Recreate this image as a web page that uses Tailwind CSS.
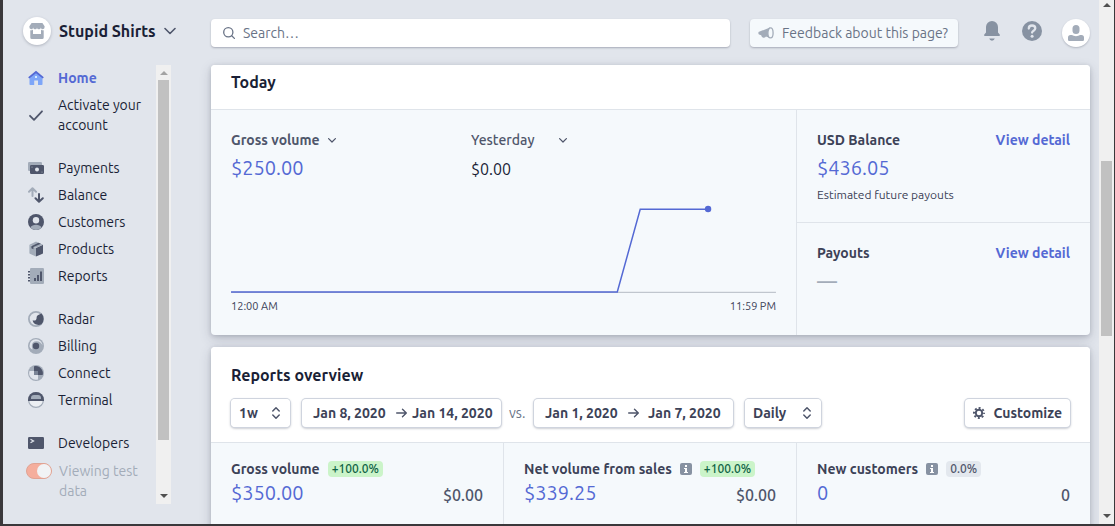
<!DOCTYPE html>
<html lang="en">
<head>
<meta charset="utf-8">
<meta name="viewport" content="width=device-width, initial-scale=1">
<title>Stupid Shirts – Dashboard</title>
<script src="https://cdn.jsdelivr.net/npm/@tailwindcss/browser@4"></script>
</head>
<body class="h-screen overflow-hidden bg-[#e1e5ec] font-['Ubuntu','Noto_Sans',sans-serif] text-sm text-[#1a1f36]">
<div class="flex h-full overflow-hidden border-r border-b-2 border-l-3 border-[#3a383b]">

  <!-- Sidebar -->
  <aside class="flex w-[168px] shrink-0 flex-col">
    <button type="button" class="mt-[17px] ml-5 flex items-center gap-2 text-left text-base font-semibold whitespace-nowrap">
      <span class="flex size-7 shrink-0 items-center justify-center rounded-full bg-white shadow-[0_1px_3px_rgba(60,66,87,0.3)]">
        <svg class="size-4" viewBox="0 0 16 16" fill="#a3acb9"><path d="M2.600 0h10.800l2.200 3.200v.9a1.900 1.900 0 0 1-3.800.3 1.900 1.900 0 0 1-3.800 0 1.900 1.900 0 0 1-3.800 0A1.900 1.900 0 0 1 .4 4.100v-.9z"/><path d="M1.300 7.300c1 .2 2-.1 2.700-.8V11h8V6.500c.7.700 1.700 1 2.700.8V14.500a1.500 1.500 0 0 1-1.500 1.500H2.800a1.500 1.500 0 0 1-1.500-1.500z"/></svg>
      </span>
      <span>Stupid Shirts</span>
      <svg class="w-3 shrink-0" viewBox="0 0 12 8" fill="none" stroke="#4f566b" stroke-width="1.600" stroke-linecap="round" stroke-linejoin="round"><path d="M1 1.500l5 5 5-5"/></svg>
    </button>

    <div class="mt-5 mb-5 flex min-h-0 flex-1">
      <nav class="flex min-w-0 flex-1 flex-col overflow-hidden pt-[3px] pl-[25px] leading-5">
        <ul class="flex flex-col gap-[7px]">
          <li><a href="#" class="flex items-center gap-3.5 font-bold text-[#5469d4]">
            <svg class="size-4 shrink-0" viewBox="0 0 16 16"><path d="M1.500 7L8 2l6.500 5v7.200a.8.8 0 0 1-.8.8H10v-4.500H6.200V15H2.300a.8.800 0 0 1-.8-.8z" fill="#7ea6f8"/><path d="M8 .8l7.800 6.400-1 1.300L8 3.200 1.200 8.500l-1-1.300z" fill="#5469d4"/><rect x="7" y="6" width="2" height="2" fill="#d6ecff"/></svg>
            Home</a></li>
          <li><a href="#" class="flex items-center gap-3.5">
            <svg class="size-4 shrink-0" viewBox="0 0 16 16" fill="none" stroke="#4f566b" stroke-width="1.800" stroke-linecap="round" stroke-linejoin="round"><path d="M2 8.800l4 4 8-8.500"/></svg>
            <span>Activate your account</span></a></li>
        </ul>
        <ul class="mt-[23px] flex flex-col gap-[7px]">
          <li><a href="#" class="flex items-center gap-3.5">
            <svg class="size-4 shrink-0" viewBox="0 0 16 16"><rect y="2" width="14" height="9" rx="1.200" fill="#a3acb9"/><path d="M3.200 5h11.600A1.200 1.200 0 0 1 16 6.200v6.600a1.200 1.200 0 0 1-1.200 1.200H3.200A1.200 1.200 0 0 1 2 12.800V6.200A1.200 1.200 0 0 1 3.200 5z" fill="#4f566b"/><circle cx="9" cy="9.500" r="2" fill="#e1e5ec"/><circle cx="4" cy="7" r=".6" fill="#a3acb9"/><circle cx="14" cy="12" r=".6" fill="#a3acb9"/></svg>
            Payments</a></li>
          <li><a href="#" class="flex items-center gap-3.5">
            <svg class="size-4 shrink-0" viewBox="0 0 16 16" fill="none" stroke-width="2" stroke-linecap="round" stroke-linejoin="round"><path d="M4.500 9V1.500M1 4.700l3.500-3.500L8 4.700" stroke="#a3acb9"/><path d="M11 7v7.500M7.500 11.300L11 14.800l3.800-3.500" stroke="#4f566b"/></svg>
            Balance</a></li>
          <li><a href="#" class="flex items-center gap-3.5">
            <svg class="size-4 shrink-0" viewBox="0 0 16 16"><circle cx="8" cy="8" r="8" fill="#4f566b"/><path d="M2.300 13.600C3.500 11.600 5.600 10.800 8 10.800s4.500.8 5.700 2.800A8 8 0 0 1 8 16a8 8 0 0 1-5.700-2.400z" fill="#a3acb9"/><circle cx="8" cy="6.200" r="3.200" fill="#e1e5ec"/></svg>
            Customers</a></li>
          <li><a href="#" class="flex items-center gap-3.5">
            <svg class="size-4 shrink-0" viewBox="0 0 16 16"><path d="M1.500 3.800L8 7v8.600L1.900 12.800a.8.800 0 0 1-.5-.7V4z" fill="#a3acb9"/><path d="M8 7l7-3.200v8.300a.8.800 0 0 1-.5.700L8 15.600z" fill="#4f566b"/><path d="M1.500 3.700L7.600.7a1 1 0 0 1 .8 0L15 3.700 8 6.700z" fill="#a3acb9"/><path d="M3.400 5.200L10.500 1.700l2.400 1.100L5.400 6.100v2.200L3.400 7.300z" fill="#4f566b"/></svg>
            Products</a></li>
          <li><a href="#" class="flex items-center gap-3.5">
            <svg class="size-4 shrink-0" viewBox="0 0 16 16"><rect x="2" width="14" height="16" rx="1.300" fill="#a3acb9"/><path d="M0 3h2v1.500H0zM0 6h2v1.500H0zM0 9h2v1.500H0zM0 12h2v1.500H0zM6 10h2v3H6zM9 7h2v6H9zM12 3.500h2V13h-2z" fill="#4f566b"/></svg>
            Reports</a></li>
        </ul>
        <ul class="mt-[23px] flex flex-col gap-[7px]">
          <li><a href="#" class="flex items-center gap-3.5">
            <svg class="size-4 shrink-0" viewBox="0 0 16 16"><circle cx="8" cy="8" r="7.100" fill="#e1e5ec" stroke="#a3acb9" stroke-width="1.800"/><path d="M13.500 2.600A7.800 7.800 0 0 1 13.500 13.200C10.500 15 5 13.500 4.700 9.300 7 10.200 8.800 8.800 8.600 6.600 8.500 5 10 3.800 13.500 2.600z" fill="#4f566b"/></svg>
            Radar</a></li>
          <li><a href="#" class="flex items-center gap-3.5">
            <svg class="size-4 shrink-0" viewBox="0 0 16 16"><circle cx="8" cy="8" r="8" fill="#a3acb9"/><path d="M1.500 8a6.500 6.500 0 0 1 13-.5C13.500 5 11.500 3.200 8.500 3.200c-3 0-4.700 2-4.700 4.800 0 1.500.5 2.600 1 3.400C2.800 11 1.500 9.500 1.500 8z" fill="#e1e5ec"/><circle cx="8" cy="8" r="3.200" fill="#4f566b"/></svg>
            Billing</a></li>
          <li><a href="#" class="flex items-center gap-3.5">
            <svg class="size-4 shrink-0" viewBox="0 0 16 16"><circle cx="8" cy="8" r="8" fill="#a3acb9"/><path d="M6 6v4h4v4.400A6.700 6.700 0 0 1 1.500 6z" fill="#e1e5ec"/><path d="M6 1.200a7.300 7.300 0 0 1 8.700 8.800H10V6H6z" fill="#4f566b"/><path d="M6 6h4v4H6z" fill="#7a8496"/></svg>
            Connect</a></li>
          <li><a href="#" class="flex items-center gap-3.5">
            <svg class="size-4 shrink-0" viewBox="0 0 16 16"><circle cx="8" cy="8" r="7.400" fill="#eceff3" stroke="#a3acb9" stroke-width="1.200"/><path d="M0 9V8a8 8 0 0 1 16 0v1z" fill="#4f566b"/><path d="M3 7V6a3 3 0 0 1 3-3h4a3 3 0 0 1 3 3v1z" fill="#a3acb9"/></svg>
            Terminal</a></li>
        </ul>
        <ul class="mt-[23px] flex flex-col gap-2">
          <li><a href="#" class="flex items-center gap-3.5">
            <svg class="size-4 shrink-0" viewBox="0 0 16 16"><rect y="2" width="16" height="12" rx="1.200" fill="#4f566b"/><path d="M2.500 4.200L5.500 6l-3 1.800" fill="none" stroke="#e1e5ec" stroke-width="1.300"/></svg>
            Developers</a></li>
          <li><label class="-ml-0.5 flex items-start gap-[7px] text-[#a3acb9]">
            <input type="checkbox" role="switch" checked class="peer sr-only">
            <span class="mt-0.5 flex h-4 w-[26px] shrink-0 justify-end rounded-full border border-[#e0a393] bg-[#f5ae9d]"><span class="size-3.5 rounded-full bg-[#f1f3f5]"></span></span>
            <span>Viewing test data</span></label></li>
        </ul>
      </nav>
      <!-- Sidebar scrollbar -->
      <div class="flex w-[15px] shrink-0 flex-col items-center bg-[#f0f0f0]" aria-hidden="true">
        <svg class="mt-1.5 mb-[5px] h-1 w-2 shrink-0" viewBox="0 0 8 4" fill="#a3a3a3"><path d="M4 0l4 4H0z"/></svg>
        <div class="w-[11px] flex-[360] bg-[#c1c1c1]"></div>
        <div class="flex-[48]"></div>
        <svg class="my-1.5 h-1 w-2 shrink-0" viewBox="0 0 8 4" fill="#505050"><path d="M0 0h8L4 4z"/></svg>
      </div>
    </div>
  </aside>

  <!-- Main column -->
  <div class="flex min-w-0 flex-1 flex-col pr-[9px] pl-10">
    <header class="mt-[19px] flex h-7 shrink-0 items-center">
      <label class="flex h-7 flex-1 items-center gap-2 rounded bg-white px-3 shadow-[0_1px_2px_rgba(60,66,87,0.35)]">
        <svg class="size-3 shrink-0" viewBox="0 0 12 12" fill="none" stroke="#697386" stroke-width="1.300" stroke-linecap="round"><circle cx="5.300" cy="5.300" r="4.600"/><path d="M8.700 8.700l2.700 2.700"/></svg>
        <input type="search" aria-label="Search" placeholder="Search…" class="min-w-0 flex-1 leading-5 outline-none placeholder:text-[#697386]">
      </label>
      <button type="button" class="ml-5 flex h-7 w-52 items-center gap-2 rounded bg-[#f5f9fc] px-2 whitespace-nowrap text-[#697386] shadow-[0_1px_2px_rgba(60,66,87,0.35)]">
        <svg class="size-4 shrink-0" viewBox="0 0 16 16"><path d="M12 2.500L1 6.800a1 1 0 0 0-.6 1v.8a1 1 0 0 0 .6.900l2.200.8c.3 1.700 1.400 2.700 2.800 2.500 1-.2 1.600-.8 1.900-1.300l4.100 1.500z" fill="#a3acb9"/><ellipse cx="12.500" cy="7.900" rx="2.600" ry="5" fill="#f5f9fc" stroke="#a3acb9" stroke-width="1.300"/></svg>
        Feedback about this page?
      </button>
      <div class="mb-1 ml-6 flex gap-5">
        <button type="button" aria-label="Notifications" class="flex w-5 justify-center">
          <svg class="h-5 w-4" viewBox="0 0 16 20" fill="#8792a2"><path d="M8 0a6 6 0 0 1 6 6v5.500l1.700 2A1 1 0 0 1 15 15H1a1 1 0 0 1-.7-1.500l1.700-2V6a6 6 0 0 1 6-6zM5.200 17.500h5.600a2.900 2.900 0 0 1-5.600 0z"/></svg>
        </button>
        <button type="button" aria-label="Help">
          <svg class="size-5" viewBox="0 0 20 20"><circle cx="10" cy="10" r="10" fill="#8792a2"/><path d="M6.800 7.500C6.800 5.600 8.200 4.500 10 4.500s3.300 1.100 3.300 2.800c0 2.300-3.200 2.400-3.200 4.300" fill="none" stroke="#e1e5ec" stroke-width="2.300" stroke-linecap="round"/><circle cx="10.100" cy="15.200" r="1.500" fill="#e1e5ec"/></svg>
        </button>
      </div>
      <button type="button" aria-label="Account" class="ml-5 flex size-7 items-center justify-center rounded-full bg-white shadow-[0_1px_2px_rgba(60,66,87,0.3)]">
        <svg class="size-4" viewBox="0 0 16 16" fill="#a3acb9"><rect x="4.500" width="7" height="9" rx="3.500"/><path d="M2.500 10h1.600c1 .7 2.300 1.200 3.900 1.200s2.900-.5 3.900-1.200h1.600A2.500 2.500 0 0 1 16 12.500v2.300a1.200 1.200 0 0 1-1.200 1.200H1.200A1.200 1.200 0 0 1 0 14.800v-2.300A2.500 2.500 0 0 1 2.500 10z"/></svg>
      </button>
    </header>

    <main class="mt-[18px] flex flex-col gap-3">
      <!-- Today -->
      <section class="overflow-hidden rounded bg-[#f5f9fc] shadow-[0_4px_12px_rgba(60,66,87,0.22),0_1px_4px_rgba(60,66,87,0.2)]">
        <h2 class="border-b border-[#dfe4ea] bg-white px-5 pt-[5px] pb-[15px] text-base leading-6 font-semibold">Today</h2>
        <div class="grid grid-cols-3">
          <div class="col-span-2 border-r border-[#dfe4ea] px-5 pt-5 pb-[19px]">
            <div class="flex text-[#4f566b]">
              <div class="w-60">
                <div class="flex items-center gap-2">
                  <select aria-label="Metric" class="appearance-none leading-5 font-semibold"><option>Gross volume</option></select>
                  <svg class="w-2 shrink-0" viewBox="0 0 8 5" fill="none" stroke="#4f566b" stroke-width="1.200" stroke-linecap="round" stroke-linejoin="round"><path d="M.6.6L4 4 7.400.6"/></svg>
                </div>
                <p class="mt-1 text-xl leading-7 text-[#5469d4]">$250.00</p>
              </div>
              <div>
                <div class="flex items-center">
                  <select aria-label="Compare with" class="w-22 appearance-none leading-5 font-medium"><option>Yesterday</option></select>
                  <svg class="w-2 shrink-0" viewBox="0 0 8 5" fill="none" stroke="#4f566b" stroke-width="1.200" stroke-linecap="round" stroke-linejoin="round"><path d="M.6.6L4 4 7.400.6"/></svg>
                </div>
                <p class="mt-1 pt-[3px] text-base leading-6 text-[#1a1f36]">$0.00</p>
              </div>
            </div>
            <svg class="mt-5 w-full overflow-visible" viewBox="0 0 546 94" role="img" aria-label="Gross volume today">
              <path d="M0 90.500H546" stroke="#b5bac3" stroke-width="1"/>
              <path d="M0 90.200H387L410 7.200H478" fill="none" stroke="#5469d4" stroke-width="1.500"/>
              <circle cx="478" cy="7" r="3.200" fill="#5469d4"/>
            </svg>
            <div class="flex justify-between text-[11px] leading-5 text-[#3c4257]"><span>12:00 AM</span><span>11:59 PM</span></div>
          </div>
          <div>
            <div class="border-b border-[#dfe4ea] px-5 pt-5 pb-[17px]">
              <div class="flex justify-between leading-5 font-semibold"><h3 class="text-[#3c4257]">USD Balance</h3><a href="#" class="text-[#5469d4]">View detail</a></div>
              <p class="mt-1 text-xl leading-7 text-[#5469d4]">$436.05</p>
              <p class="mt-[3px] text-xs leading-5 text-[#3c4257]">Estimated future payouts</p>
            </div>
            <div class="px-5 pt-5">
              <div class="flex justify-between leading-5 font-semibold"><h3 class="text-[#3c4257]">Payouts</h3><a href="#" class="text-[#5469d4]">View detail</a></div>
              <p class="mt-1 text-xl leading-7 font-medium text-[#a3acb9]">—</p>
            </div>
          </div>
        </div>
      </section>

      <!-- Reports overview -->
      <section class="overflow-hidden rounded bg-[#f5f9fc] shadow-[0_4px_12px_rgba(60,66,87,0.22),0_1px_4px_rgba(60,66,87,0.2)]">
        <div class="border-b border-[#dfe4ea] bg-white px-5 pt-4 pb-[15px]">
          <h2 class="text-base leading-6 font-semibold">Reports overview</h2>
          <div class="mt-3 flex h-7 items-center font-semibold whitespace-nowrap text-[#3c4257]">
            <div class="relative h-7 rounded shadow-[0_0_0_1px_#cfd4de,0_1px_2px_1px_rgba(60,66,87,0.25)]">
              <select aria-label="Period" class="h-7 w-[59px] appearance-none rounded bg-white pl-2"><option>1w</option></select>
              <svg class="pointer-events-none absolute top-2 right-2.5 h-3 w-2" viewBox="0 0 8 12" fill="none" stroke="#4f566b" stroke-width="1.500" stroke-linecap="round" stroke-linejoin="round"><path d="M.8 4L4 .8 7.200 4M.8 8L4 11.200 7.200 8"/></svg>
            </div>
            <div class="ml-3 flex h-7 w-[199px] items-center rounded bg-white pl-[11px] shadow-[0_0_0_1px_#cfd4de,0_1px_2px_1px_rgba(60,66,87,0.25)]">
              <button type="button" class="w-[83px] text-left">Jan 8, 2020</button>
              <svg class="mr-[5px] w-[11px] shrink-0" viewBox="0 0 11 10" fill="none" stroke="#4f566b" stroke-width="1.400" stroke-linecap="round" stroke-linejoin="round"><path d="M.7 5h9.600M6.500 1.200L10.300 5 6.500 8.800"/></svg>
              <button type="button">Jan 14, 2020</button>
            </div>
            <span class="mx-2 w-[17px] font-normal text-[#697386]">vs.</span>
            <div class="flex h-7 w-[199px] items-center rounded bg-white pl-[11px] shadow-[0_0_0_1px_#cfd4de,0_1px_2px_1px_rgba(60,66,87,0.25)]">
              <button type="button" class="w-[83px] text-left">Jan 1, 2020</button>
              <svg class="mr-[9px] w-[11px] shrink-0" viewBox="0 0 11 10" fill="none" stroke="#4f566b" stroke-width="1.400" stroke-linecap="round" stroke-linejoin="round"><path d="M.7 5h9.600M6.500 1.200L10.300 5 6.500 8.800"/></svg>
              <button type="button">Jan 7, 2020</button>
            </div>
            <div class="relative ml-3 h-7 rounded shadow-[0_0_0_1px_#cfd4de,0_1px_2px_1px_rgba(60,66,87,0.25)]">
              <select aria-label="Interval" class="h-7 w-[76px] appearance-none rounded bg-white pl-2"><option>Daily</option></select>
              <svg class="pointer-events-none absolute top-2 right-2.5 h-3 w-2" viewBox="0 0 8 12" fill="none" stroke="#4f566b" stroke-width="1.500" stroke-linecap="round" stroke-linejoin="round"><path d="M.8 4L4 .8 7.200 4M.8 8L4 11.200 7.200 8"/></svg>
            </div>
            <button type="button" class="ml-auto flex h-7 items-center gap-2 rounded bg-white px-2 shadow-[0_0_0_1px_#cfd4de,0_1px_2px_1px_rgba(60,66,87,0.25)]">
              <svg class="size-3 shrink-0" viewBox="0 0 12 12" fill="none" stroke="#4f566b"><circle cx="6" cy="6" r="3.200" stroke-width="1.900"/><circle cx="6" cy="6" r="5" stroke-width="2" stroke-dasharray="1.960 1.967" stroke-dashoffset=".98"/></svg>
              Customize
            </button>
          </div>
        </div>
        <div class="grid grid-cols-3 text-[#4f566b]">
          <div class="border-r border-[#dfe4ea] px-5 pt-4 pb-10">
            <div class="flex items-center gap-2 whitespace-nowrap"><h3 class="leading-5 font-semibold text-[#3c4257]">Gross volume</h3><span class="rounded bg-[#cbf4c9] px-1 text-xs leading-4 font-medium text-[#0e6245]">+100.0%</span></div>
            <div class="flex items-center justify-between"><span class="text-xl leading-7 text-[#5469d4]">$350.00</span><span class="pt-1 text-base leading-6 font-medium">$0.00</span></div>
          </div>
          <div class="border-r border-[#dfe4ea] px-5 pt-4 pb-10">
            <div class="flex items-center gap-2 whitespace-nowrap"><h3 class="leading-5 font-semibold text-[#3c4257]">Net volume from sales</h3>
              <svg class="size-3 shrink-0" viewBox="0 0 12 12"><rect width="12" height="12" rx="2" fill="#8792a2"/><path d="M5 2h2v2H5zM4 5h3v4h1v1H4V9h1V6H4z" fill="#fff"/></svg>
              <span class="rounded bg-[#cbf4c9] px-1 text-xs leading-4 font-medium text-[#0e6245]">+100.0%</span></div>
            <div class="flex items-center justify-between"><span class="text-xl leading-7 text-[#5469d4]">$339.25</span><span class="pt-1 text-base leading-6 font-medium">$0.00</span></div>
          </div>
          <div class="px-5 pt-4 pb-10">
            <div class="flex items-center gap-2 whitespace-nowrap"><h3 class="leading-5 font-semibold text-[#3c4257]">New customers</h3>
              <svg class="size-3 shrink-0" viewBox="0 0 12 12"><rect width="12" height="12" rx="2" fill="#8792a2"/><path d="M5 2h2v2H5zM4 5h3v4h1v1H4V9h1V6H4z" fill="#fff"/></svg>
              <span class="rounded bg-[#e3e8ee] px-1 text-xs leading-4 font-medium text-[#4f566b]">0.0%</span></div>
            <div class="flex items-center justify-between"><span class="text-xl leading-7 text-[#5469d4]">0</span><span class="pt-1 text-base leading-6 font-medium">0</span></div>
          </div>
        </div>
      </section>
    </main>
  </div>

  <!-- Page scrollbar -->
  <div class="flex w-[15px] shrink-0 flex-col items-center bg-[#f0f0f0]" aria-hidden="true">
    <svg class="mt-[3px] h-1 w-2 shrink-0" viewBox="0 0 8 4" fill="#505050"><path d="M4 0l4 4H0z"/></svg>
    <div class="flex-[154]"></div>
    <div class="w-[11px] flex-[175] bg-[#c1c1c1]"></div>
    <div class="flex-[178]"></div>
    <svg class="mb-1.5 h-1 w-2 shrink-0" viewBox="0 0 8 4" fill="#505050"><path d="M0 0h8L4 4z"/></svg>
  </div>
</div>
</body>
</html>
